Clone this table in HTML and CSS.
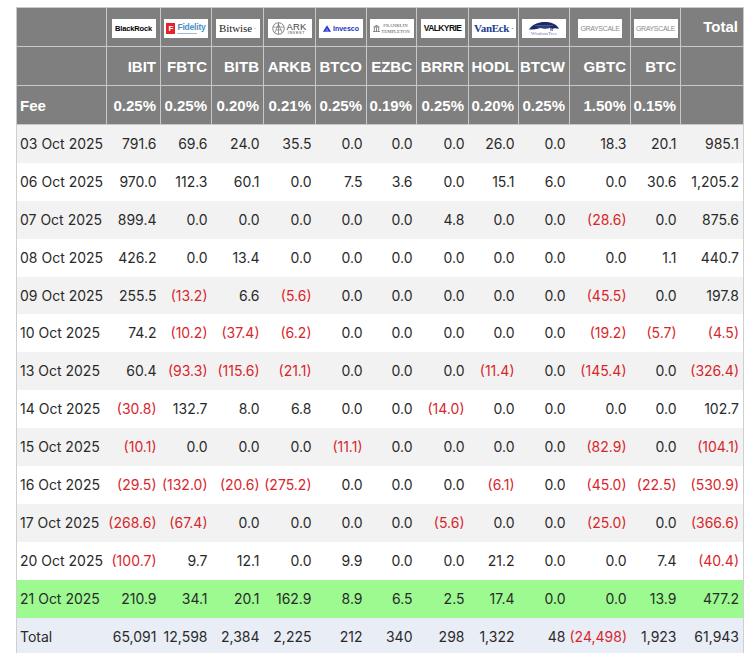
FILE: index.html
```html
<!DOCTYPE html>
<html>
<head>
<meta charset="utf-8">
<link rel="stylesheet" href="styles.css">
</head>
<body>
<table class="flows">
<colgroup>
<col class="c-date"><col class="c54"><col class="c51"><col class="c52"><col class="c52"><col class="c51"><col class="c50"><col class="c52"><col class="c50"><col class="c51"><col class="c61"><col class="c50"><col class="c63">
</colgroup>
<thead>
<tr class="h-logo">
<th></th>
<th><span class="logo blackrock">BlackRock</span></th>
<th><span class="logo fidelity"><span class="fid-f">F</span><span class="fid-txt"><span class="fid-name">Fidelity</span><span class="fid-sub"></span></span></span></th>
<th><span class="logo bitwise">Bitwise<sup>·</sup></span></th>
<th><span class="logo ark"><svg class="ark-ico" viewBox="0 0 14 14" width="13" height="13"><circle cx="7" cy="7" r="6.2" fill="none" stroke="#555" stroke-width="0.8"/><path d="M3 11.5 L7 2.5 L11 11.5 M4.2 8.5 L9.8 8.5 M7 1 L7 13 M1.5 5.5 L12.5 5.5" fill="none" stroke="#555" stroke-width="0.6"/></svg><span class="ark-txt"><span class="ark-name">ARK</span><span class="ark-sub">INVEST</span></span></span></th>
<th><span class="logo invesco"><svg viewBox="0 0 10 8" width="8" height="7"><path d="M5 0 L10 8 L0 8 Z" fill="#2336c8"/><path d="M5 3 L7.5 8 L2.5 8 Z" fill="#6d7fe8"/></svg><span>Invesco</span></span></th>
<th><span class="logo franklin"><svg viewBox="0 0 8 8" width="7" height="7"><path d="M0 2 L4 0 L8 2 Z M0.5 2.5 H7.5 V3 H0.5 Z M1 3.2 H2 V7 H1 Z M3.5 3.2 H4.5 V7 H3.5 Z M6 3.2 H7 V7 H6 Z M0 7 H8 V8 H0 Z" fill="#777"/></svg><span class="fr-txt"><span>FRANKLIN</span><span>TEMPLETON</span></span></span></th>
<th><span class="logo valkyrie">VALKYRIE</span></th>
<th><span class="logo vaneck">VanEck<sup>·</sup></span></th>
<th><span class="logo wisdom"><svg viewBox="0 0 32 10" width="32" height="10"><path d="M1 8.5 C3 5 7 2.5 12 1.5 C16 0.8 21 1 25 2.5 C28 3.6 30 5.5 31 8 C28.5 7 26 7 24 8 L22.5 6.8 C20 7.8 16 8 12.5 7 C9 8 5 8.5 1 8.5 Z" fill="#1c2a6b"/><path d="M7 4.5 L25 4.5 M9 6 L22 6" stroke="#8d9bc4" stroke-width="0.4"/><path d="M22.5 6.8 L23 10 M24 8 L24.5 10" stroke="#1c2a6b" stroke-width="0.7"/></svg><span class="wt-txt">WisdomTree</span></span></th>
<th><span class="logo grayscale">GRAYSCALE</span></th>
<th><span class="logo grayscale">GRAYSCALE</span></th>
<th class="total-h">Total</th>
</tr>
<tr class="h-tick">
<th></th><th>IBIT</th><th>FBTC</th><th>BITB</th><th>ARKB</th><th>BTCO</th><th>EZBC</th><th>BRRR</th><th>HODL</th><th>BTCW</th><th>GBTC</th><th>BTC</th><th></th>
</tr>
<tr class="h-fee">
<th class="fee-l">Fee</th><th>0.25%</th><th>0.25%</th><th>0.20%</th><th>0.21%</th><th>0.25%</th><th>0.19%</th><th>0.25%</th><th>0.20%</th><th>0.25%</th><th>1.50%</th><th>0.15%</th><th></th>
</tr>
</thead>
<tbody>
<tr class="odd"><td>03 Oct 2025</td><td>791.6</td><td>69.6</td><td>24.0</td><td>35.5</td><td>0.0</td><td>0.0</td><td>0.0</td><td>26.0</td><td>0.0</td><td>18.3</td><td>20.1</td><td>985.1</td></tr>
<tr class="even"><td>06 Oct 2025</td><td>970.0</td><td>112.3</td><td>60.1</td><td>0.0</td><td>7.5</td><td>3.6</td><td>0.0</td><td>15.1</td><td>6.0</td><td>0.0</td><td>30.6</td><td>1,205.2</td></tr>
<tr class="odd"><td>07 Oct 2025</td><td>899.4</td><td>0.0</td><td>0.0</td><td>0.0</td><td>0.0</td><td>0.0</td><td>4.8</td><td>0.0</td><td>0.0</td><td class="neg">(28.6)</td><td>0.0</td><td>875.6</td></tr>
<tr class="even"><td>08 Oct 2025</td><td>426.2</td><td>0.0</td><td>13.4</td><td>0.0</td><td>0.0</td><td>0.0</td><td>0.0</td><td>0.0</td><td>0.0</td><td>0.0</td><td>1.1</td><td>440.7</td></tr>
<tr class="odd"><td>09 Oct 2025</td><td>255.5</td><td class="neg">(13.2)</td><td>6.6</td><td class="neg">(5.6)</td><td>0.0</td><td>0.0</td><td>0.0</td><td>0.0</td><td>0.0</td><td class="neg">(45.5)</td><td>0.0</td><td>197.8</td></tr>
<tr class="even"><td>10 Oct 2025</td><td>74.2</td><td class="neg">(10.2)</td><td class="neg">(37.4)</td><td class="neg">(6.2)</td><td>0.0</td><td>0.0</td><td>0.0</td><td>0.0</td><td>0.0</td><td class="neg">(19.2)</td><td class="neg">(5.7)</td><td class="neg">(4.5)</td></tr>
<tr class="odd"><td>13 Oct 2025</td><td>60.4</td><td class="neg">(93.3)</td><td class="neg">(115.6)</td><td class="neg">(21.1)</td><td>0.0</td><td>0.0</td><td>0.0</td><td class="neg">(11.4)</td><td>0.0</td><td class="neg">(145.4)</td><td>0.0</td><td class="neg">(326.4)</td></tr>
<tr class="even"><td>14 Oct 2025</td><td class="neg">(30.8)</td><td>132.7</td><td>8.0</td><td>6.8</td><td>0.0</td><td>0.0</td><td class="neg">(14.0)</td><td>0.0</td><td>0.0</td><td>0.0</td><td>0.0</td><td>102.7</td></tr>
<tr class="odd"><td>15 Oct 2025</td><td class="neg">(10.1)</td><td>0.0</td><td>0.0</td><td>0.0</td><td class="neg">(11.1)</td><td>0.0</td><td>0.0</td><td>0.0</td><td>0.0</td><td class="neg">(82.9)</td><td>0.0</td><td class="neg">(104.1)</td></tr>
<tr class="even"><td>16 Oct 2025</td><td class="neg">(29.5)</td><td class="neg">(132.0)</td><td class="neg">(20.6)</td><td class="neg">(275.2)</td><td>0.0</td><td>0.0</td><td>0.0</td><td class="neg">(6.1)</td><td>0.0</td><td class="neg">(45.0)</td><td class="neg">(22.5)</td><td class="neg">(530.9)</td></tr>
<tr class="odd"><td>17 Oct 2025</td><td class="neg">(268.6)</td><td class="neg">(67.4)</td><td>0.0</td><td>0.0</td><td>0.0</td><td>0.0</td><td class="neg">(5.6)</td><td>0.0</td><td>0.0</td><td class="neg">(25.0)</td><td>0.0</td><td class="neg">(366.6)</td></tr>
<tr class="even"><td>20 Oct 2025</td><td class="neg">(100.7)</td><td>9.7</td><td>12.1</td><td>0.0</td><td>9.9</td><td>0.0</td><td>0.0</td><td>21.2</td><td>0.0</td><td>0.0</td><td>7.4</td><td class="neg">(40.4)</td></tr>
<tr class="latest"><td>21 Oct 2025</td><td>210.9</td><td>34.1</td><td>20.1</td><td>162.9</td><td>8.9</td><td>6.5</td><td>2.5</td><td>17.4</td><td>0.0</td><td>0.0</td><td>13.9</td><td>477.2</td></tr>
<tr class="total"><td>Total</td><td>65,091</td><td>12,598</td><td>2,384</td><td>2,225</td><td>212</td><td>340</td><td>298</td><td>1,322</td><td>48</td><td class="neg">(24,498)</td><td>1,923</td><td>61,943</td></tr>
</tbody>
</table>
</body>
</html>
```

FILE: styles.css
```css
html, body {
  margin: 0;
  padding: 0;
  background: #ffffff;
}
body {
  padding: 7px 0 0 16px;
  font-family: Inter, "Liberation Sans", sans-serif;
}
.flows {
  border-collapse: collapse;
  table-layout: fixed;
  width: 727px;
}
.c-date { width: 90px; }
.c54 { width: 54px; }
.c51 { width: 51px; }
.c52 { width: 52px; }
.c50 { width: 50px; }
.c61 { width: 61px; }
.c63 { width: 63px; }

thead th {
  background: #7f7f7f;
  border: 1px solid #c9c9c9;
  color: #ffffff;
  font-family: "Liberation Sans", Arial, sans-serif;
  font-weight: bold;
  font-size: 15px;
  height: 38px;
  padding: 0 4px 0 0;
  text-align: right;
  white-space: nowrap;
  line-height: 1;
}
thead tr.h-logo th {
  text-align: center;
  padding: 3px 0 0 0;
  height: 35px;
}
thead tr.h-logo th.total-h {
  text-align: right;
  padding: 0 5px 1px 0;
  height: 37px;
  vertical-align: middle;
}
thead th.fee-l {
  text-align: left;
  padding-left: 3px;
}

tbody td {
  height: 37.9px;
  padding: 0 4px 0 0;
  font-size: 14px;
  color: #2a2a2a;
  text-align: right;
  white-space: nowrap;
  border: none;
  line-height: 1;
}
tbody td:first-child {
  text-align: left;
  padding: 0 0 0 3px;
  border-left: 1px solid #cfcfcf;
}
tbody td:last-child {
  border-right: 1px solid #cfcfcf;
}
tbody tr.odd td { background: #f2f2f2; }
tbody tr.even td { background: #ffffff; }
tbody tr.latest td { background: #9cfa90; }
tbody tr.total td { background: #e9edf6; }
tbody td.neg { color: #d8262c; }

/* logos */
.logo {
  display: inline-flex;
  align-items: center;
  justify-content: center;
  gap: 2px;
  width: 44px;
  height: 19px;
  background: #ffffff;
  color: #111;
  overflow: hidden;
  vertical-align: middle;
  font-weight: normal;
  line-height: 1;
}
.blackrock {
  font-family: "Liberation Sans", sans-serif;
  font-weight: bold;
  font-size: 7.5px;
  letter-spacing: -0.15px;
  color: #000;
}
.fid-f {
  display: inline-flex;
  align-items: center;
  justify-content: center;
  width: 9px;
  height: 11px;
  background: #e2232a;
  color: #fff;
  font-family: "Liberation Sans", sans-serif;
  font-weight: bold;
  font-size: 8px;
}
.fid-txt {
  display: flex;
  flex-direction: column;
  align-items: flex-start;
  gap: 1px;
}
.fid-name {
  font-family: "Liberation Sans", sans-serif;
  font-size: 8.5px;
  font-weight: bold;
  color: #4a8fc9;
  letter-spacing: -0.2px;
}
.fid-sub {
  display: block;
  width: 20px;
  height: 1px;
  background: #9bbbd4;
}
.bitwise {
  font-family: "Liberation Serif", serif;
  font-size: 11px;
  color: #222;
  letter-spacing: -0.1px;
}
.bitwise sup, .vaneck sup {
  font-size: 6px;
  vertical-align: top;
}
.ark { gap: 1px; }
.ark-txt {
  display: flex;
  flex-direction: column;
  align-items: center;
  color: #444;
  font-family: "Liberation Sans", sans-serif;
}
.ark-name { font-size: 9.5px; letter-spacing: 0.2px; }
.ark-sub { font-size: 3.8px; letter-spacing: 0.6px; margin-top: 0.5px; }
.invesco {
  font-family: "Liberation Sans", sans-serif;
  font-weight: bold;
  font-size: 7px;
  color: #2336c8;
}
.franklin { gap: 1px; }
.fr-txt {
  display: flex;
  flex-direction: column;
  font-family: "Liberation Serif", serif;
  font-size: 4.8px;
  color: #555;
  line-height: 1.1;
}
.valkyrie {
  font-family: "Liberation Sans", sans-serif;
  font-weight: bold;
  font-size: 8.5px;
  letter-spacing: -0.6px;
  color: #111;
}
.vaneck {
  font-family: "Liberation Serif", serif;
  font-weight: bold;
  font-size: 11px;
  color: #213f91;
  letter-spacing: -0.3px;
}
.wisdom {
  flex-direction: column;
  gap: 0;
}
.wt-txt {
  font-family: "Liberation Serif", serif;
  font-size: 5px;
  color: #6b7ba8;
  letter-spacing: 0.1px;
}
.grayscale {
  font-family: "Liberation Sans", sans-serif;
  font-size: 7px;
  color: #8a8a8a;
  letter-spacing: -0.35px;
}
```
